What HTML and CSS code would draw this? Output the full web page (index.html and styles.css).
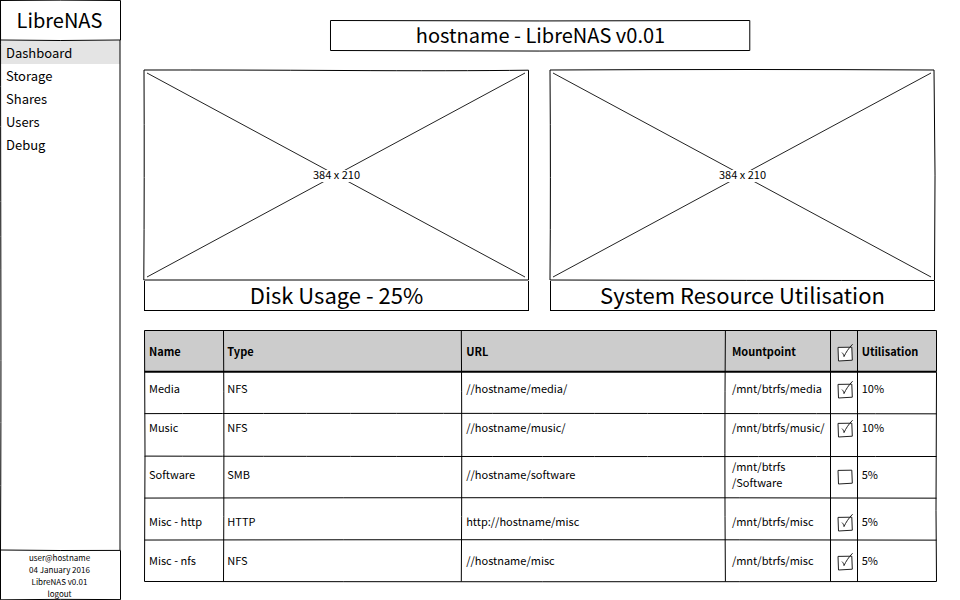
FILE: index.html
```html
<!DOCTYPE html>
<html lang="en">
<head>
<meta charset="utf-8">
<title>LibreNAS</title>
<link rel="stylesheet" href="styles.css">
</head>
<body>
<svg class="defs" aria-hidden="true">
  <symbol id="box" viewBox="0 0 18 20"><path fill="#fff" d="M2 5.4 15.8 5.2 16.3 18.2 2.5 19Z"/></symbol>
  <symbol id="tick" viewBox="0 0 18 20"><path d="M6 10.6C7.2 11.6 7.7 13 8 14.6 9.800 10.500 12.800 6 16.600 2.200"/></symbol>
</svg>

<aside class="sidebar">
  <div class="sidebar-body">
    <svg class="sketch" viewBox="0 0 121 550" preserveAspectRatio="none" aria-hidden="true"><path d="M.5 0Q.7 180 .9 300T.5 550M120 40V550"/></svg>
    <div class="brand">
      <svg class="sketch" viewBox="0 0 121 40" preserveAspectRatio="none" aria-hidden="true"><path d="M.5 .5Q60 -.2 120.500 .5V40Q60 41 .5 40Z"/></svg>
      LibreNAS
    </div>
    <nav class="menu">
      <a class="active" href="#dashboard">Dashboard</a>
      <a href="#storage">Storage</a>
      <a href="#shares">Shares</a>
      <a href="#users">Users</a>
      <a href="#debug">Debug</a>
    </nav>
  </div>
  <footer class="session">
    <svg class="sketch" viewBox="0 0 121 50" preserveAspectRatio="none" aria-hidden="true"><path d="M.5 0Q60 .8 120.500 .4V49.600Q60 49 .5 49.800Z"/></svg>
    <span>user@hostname</span>
    <span>04 January 2016</span>
    <span>LibreNAS v0.01</span>
    <a href="#logout">logout</a>
  </footer>
</aside>

<main>
  <h1>
    <svg class="sketch" viewBox="0 0 421 31" preserveAspectRatio="none" aria-hidden="true"><path d="M.5 .5Q210 1.400 420.500 .5V30.500Q210 31.600 .5 30.500Z"/></svg>
    hostname - LibreNAS v0.01
  </h1>

  <div class="cards">
    <section class="card">
      <div class="placeholder">
        <svg class="sketch" viewBox="0 0 385 211" preserveAspectRatio="none" aria-hidden="true"><path d="M0 0Q90 -.1 200 .5T384.500 .2V210H-.2Q.5 110 0 0"/><path class="cross" d="M3 3 381 207M381 3 3 207"/></svg>
        <span>384 x 210</span>
      </div>
      <h2>Disk Usage - 25%</h2>
    </section>
    <section class="card">
      <div class="placeholder">
        <svg class="sketch" viewBox="0 0 385 211" preserveAspectRatio="none" aria-hidden="true"><path d="M0 0Q200 -1 384 0Q385.800 105 384.500 210.500Q200 210.500 0 210Q.8 110 0 0"/><path class="cross" d="M3 3 381 207M381 3 3 207"/></svg>
        <span>384 x 210</span>
      </div>
      <h2>System Resource Utilisation</h2>
    </section>
  </div>

  <div class="shares">
    <svg class="sketch" viewBox="0 0 793 251" preserveAspectRatio="none" aria-hidden="true">
      <path class="head" d="M0 0H793V41H0Z"/>
      <path d="M.5 .5H792.500V41.500M.5 .5 1 125 .5 250.500Q400 251 792.500 250.500L792 180 792.500 42"/>
      <path class="rule" d="M.5 41.700Q400 40.600 792.500 41.700"/>
      <path d="M.5 83.300Q300 82.700 792.500 83.500M.5 125.600Q300 126.200 792.500 126M.5 167.400Q400 166.600 792.500 167.500M.5 209.200Q400 208.500 792.500 209.300"/>
      <path d="M79.500 .5Q80.300 120 79.500 250.500M317.300 .5Q318.200 120 317.300 250.500M581.400 .5Q580.400 120 581.400 250.500M686.500 .5V250.500M713.500 .5V250.500"/>
    </svg>
    <table>
      <colgroup><col class="c-name"><col class="c-type"><col class="c-url"><col class="c-mount"><col class="c-check"><col class="c-use"></colgroup>
      <thead>
        <tr><th>Name</th><th>Type</th><th>URL</th><th>Mountpoint</th><th><label class="check"><input type="checkbox" aria-label="All shares" checked><svg aria-hidden="true"><use href="#box"/><use class="tick" href="#tick"/></svg></label></th><th>Utilisation</th></tr>
      </thead>
      <tbody>
        <tr><td>Media</td><td>NFS</td><td>//hostname/media/</td><td>/mnt/btrfs/media</td><td><label class="check"><input type="checkbox" aria-label="Media" checked><svg aria-hidden="true"><use href="#box"/><use class="tick" href="#tick"/></svg></label></td><td>10%</td></tr>
        <tr><td>Music</td><td>NFS</td><td>//hostname/music/</td><td>/mnt/btrfs/music/</td><td><label class="check"><input type="checkbox" aria-label="Music" checked><svg aria-hidden="true"><use href="#box"/><use class="tick" href="#tick"/></svg></label></td><td>10%</td></tr>
        <tr><td>Software</td><td>SMB</td><td>//hostname/software</td><td>/mnt/btrfs<br>/Software</td><td><label class="check"><input type="checkbox" aria-label="Software"><svg aria-hidden="true"><use href="#box"/><use class="tick" href="#tick"/></svg></label></td><td>5%</td></tr>
        <tr><td>Misc - http</td><td>HTTP</td><td>http://hostname/misc</td><td>/mnt/btrfs/misc</td><td><label class="check"><input type="checkbox" aria-label="Misc - http" checked><svg aria-hidden="true"><use href="#box"/><use class="tick" href="#tick"/></svg></label></td><td>5%</td></tr>
        <tr><td>Misc - nfs</td><td>NFS</td><td>//hostname/misc</td><td>/mnt/btrfs/misc</td><td><label class="check"><input type="checkbox" aria-label="Misc - nfs" checked><svg aria-hidden="true"><use href="#box"/><use class="tick" href="#tick"/></svg></label></td><td>5%</td></tr>
      </tbody>
    </table>
  </div>
</main>
</body>
</html>
```
FILE: styles.css
```css
* { box-sizing: border-box; }

body {
  margin: 0;
  min-height: 100vh;
  display: grid;
  grid-template-columns: 121px 1fr;
  background: #fff;
  color: #000;
  font-family: "Noto Sans CJK SC", "Noto Sans", sans-serif;
  font-size: 11px;
}

a { color: inherit; text-decoration: none; }
h1, h2 { margin: 0; font-weight: 400; text-align: center; }

.defs { position: absolute; width: 0; height: 0; }

/* Hand-drawn outlines stretched over their parent box */
.sketch {
  position: absolute;
  inset: 0;
  width: 100%;
  height: 100%;
  overflow: visible;
  pointer-events: none;
}
.sketch path {
  fill: none;
  stroke: #000;
  stroke-width: 1;
  vector-effect: non-scaling-stroke;
}
.sketch .cross { stroke: #222; }
.sketch .head { fill: #ccc; stroke: none; }
.sketch .rule { stroke-width: 2; }

.sidebar { display: flex; flex-direction: column; }
.sidebar-body { position: relative; flex: 1; }
.brand {
  position: relative;
  padding-right: 2px;
  font-size: 20px;
  line-height: 40px;
  text-align: center;
}
.menu { display: flex; flex-direction: column; padding: 1px; }
.menu a { padding-left: 5px; font-size: 13px; line-height: 23px; }
.menu .active { background: #e4e4e4; }
.session {
  position: relative;
  display: flex;
  flex-direction: column;
  align-items: center;
  padding: 2px 2px 0 0;
  font-size: 8px;
  line-height: 12px;
}

main { padding: 20px 23px 18px; }
h1 {
  position: relative;
  width: 53%;
  margin: 0 auto 19px;
  padding-bottom: 2px;
  font-size: 20px;
  line-height: 29px;
}

.cards {
  display: grid;
  grid-template-columns: 1fr 1fr;
  gap: 21px;
  margin: 0 2px 19px 0;
}
.placeholder {
  position: relative;
  display: grid;
  place-items: center;
  aspect-ratio: 385 / 211;
}
.placeholder span {
  position: relative;
  padding-bottom: 3px;
  background: #fff;
  line-height: 9px;
}
.card h2 {
  padding-bottom: 3px;
  border: 1px solid #000;
  border-top: 0;
  font-size: 22px;
  line-height: 26px;
}

.shares { position: relative; }
table {
  position: relative;
  width: 100%;
  table-layout: fixed;
  border-collapse: collapse;
  white-space: nowrap;
}
th, td { text-align: left; line-height: 16px; }
th { padding: 13px 0 12px 5px; }
td { padding: 9px 0 14px 5px; }
tr > :nth-child(2), tr > :nth-child(6) { padding-left: 4px; }
tr > :nth-child(4) { padding-left: 9px; }
tr > :nth-child(5) { padding-left: 10px; }
.c-name { width: 10%; }
.c-type { width: 30%; }
.c-url { width: 33%; }
.c-mount { width: 13%; }
.c-check { width: 4%; }

.check { position: relative; display: block; width: 18px; height: 16px; }
.check svg {
  display: block;
  width: 18px;
  height: 20px;
  margin-top: -2px;
  margin-bottom: -2px;
  fill: none;
  stroke: #222;
  stroke-width: 1;
}
.check input { position: absolute; inset: 0; margin: 0; opacity: 0; }
.check .tick { visibility: hidden; }
.check input:checked + svg .tick { visibility: visible; }
```
